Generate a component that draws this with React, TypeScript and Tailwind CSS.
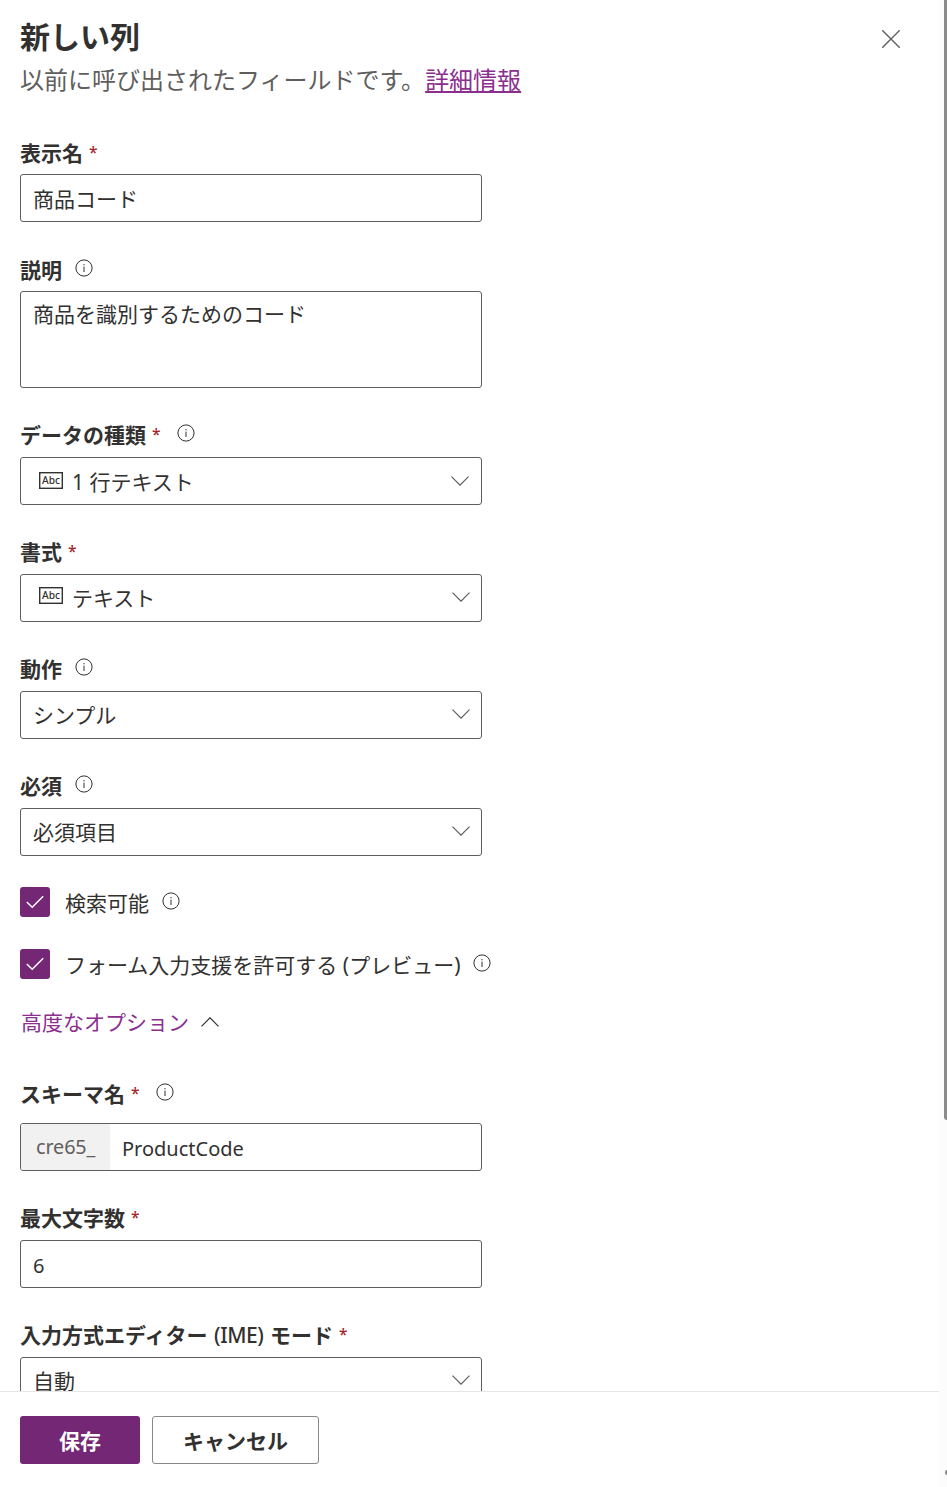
import React from "react";

const InfoIcon = ({ className = "" }: { className?: string }) => (
    <svg className={`h-[18px] w-[18px] shrink-0 text-[#323130] ${className}`} viewBox="0 0 18 18" fill="none">
        <circle cx="9" cy="9" r="8.1" stroke="currentColor" strokeWidth="1" />
        <path d="M9 7.6V13" stroke="currentColor" strokeWidth="1" />
        <path d="M9 5V6.3" stroke="currentColor" strokeWidth="1" />
    </svg>
);

const Chevron = ({ className = "" }: { className?: string }) => (
    <svg className={`h-[10px] w-[18px] shrink-0 ${className}`} viewBox="0 0 18 10" fill="none">
        <path d="M0.5 0.7L9 9.2L17.5 0.7" stroke="currentColor" strokeWidth="1.2" />
    </svg>
);

const AbcIcon = ({ className = "" }: { className?: string }) => (
    <svg className={`mr-[9px] ml-[6px] h-[17px] w-[24px] shrink-0 ${className}`} viewBox="0 0 24 17" fill="none">
        <rect x="0.7" y="0.7" width="22.6" height="15.6" stroke="#323130" strokeWidth="1.4" />
        <text x="12" y="12.2" textAnchor="middle" fontSize="10.2" fontWeight="500" fill="#323130">
            Abc
        </text>
    </svg>
);

const Label = ({
    children,
    required,
    info,
    className = "pb-[2px]",
}: {
    children: React.ReactNode;
    required?: boolean;
    info?: boolean;
    className?: string;
}) => (
    <div className={`flex h-[42px] items-center leading-[42px] font-bold whitespace-nowrap ${className}`}>
        <span>{children}</span>
        {required && <span className="mb-[3px] ml-[6px] text-[15.5px] font-medium text-[#a4262c]">*</span>}
        {info && <InfoIcon className={required ? "mb-[4px] ml-[16.5px]" : "mb-[4px] ml-[13px]"} />}
    </div>
);

const Select = ({
    children,
    icon,
    textClass = "",
    chevronClass = "mb-[2px]",
}: {
    children: React.ReactNode;
    icon?: React.ReactNode;
    textClass?: string;
    chevronClass?: string;
}) => (
    <div className="flex h-[48px] w-[462px] items-center rounded-[3px] border border-[#605e5c] pr-[11px] pl-[12px]">
        {icon}
        <span className={`flex-1 leading-[46px] ${textClass}`}>{children}</span>
        <Chevron className={`text-[#605e5c] ${chevronClass}`} />
    </div>
);

const CheckRow = ({ children }: { children: React.ReactNode }) => (
    <div className="flex h-[30px] items-center">
        <span className="flex h-[30px] w-[30px] items-center justify-center rounded-[3px] bg-[#742774]">
            <svg className="h-[14px] w-[18px]" viewBox="0 0 18 14" fill="none">
                <path d="M0.8 7L6.2 12.3L17.2 1.2" stroke="#fff" strokeWidth="1.5" />
            </svg>
        </span>
        <span className="mt-[2px] ml-[15px] leading-[30px] whitespace-nowrap">{children}</span>
        <InfoIcon className="mb-[2px] ml-[13px]" />
    </div>
);

const App = () => {
    return (
        <div
            lang="ja"
            className="flex h-[1487px] w-[947px] overflow-hidden bg-white font-['Noto_Sans','Noto_Sans_CJK_JP',sans-serif] text-[21px] text-[#323130]"
        >
            <div className="flex w-[939px] flex-col">
                <main className="h-[1391px] overflow-hidden pl-[20px]">
                    <header className="flex h-[132px] justify-between pr-[39px]">
                        <div>
                            <h1 className="pt-[15px] text-[30px] leading-[44px] font-bold">新しい列</h1>
                            <p className="text-[24px] leading-[42px] text-[#605e5c]">
                                以前に呼び出されたフィールドです。
                                <a className="text-[#8b2f8f] underline">詳細情報</a>
                            </p>
                        </div>
                        <button aria-label="閉じる" className="mt-[30px] h-[18px] w-[18px]">
                            <svg viewBox="0 0 18 18" fill="none">
                                <path d="M0.3 0.3L17.7 17.7M17.7 0.3L0.3 17.7" stroke="#605e5c" strokeWidth="1.4" />
                            </svg>
                        </button>
                    </header>

                    <div className="flex flex-col gap-[27px]">
                        <div>
                            <Label required className="pb-0">表示名</Label>
                            <div className="h-[48px] w-[462px] rounded-[3px] border border-[#605e5c] px-[12px] leading-[48px]">
                                商品コード
                            </div>
                        </div>
                        <div>
                            <Label info className="pb-0">説明</Label>
                            <div className="h-[97px] w-[462px] rounded-[3px] border border-[#605e5c] px-[12px] leading-[44px]">
                                商品を識別するためのコード
                            </div>
                        </div>
                        <div>
                            <Label required info>データの種類</Label>
                            <Select
                                icon={<AbcIcon className="mb-[2px]" />}
                                textClass="mt-[2px]"
                                chevronClass="mr-[1px]"
                            >
                                1 行テキスト
                            </Select>
                        </div>
                        <div>
                            <Label required>書式</Label>
                            <Select icon={<AbcIcon className="mb-[6px]" />}>テキスト</Select>
                        </div>
                        <div>
                            <Label info>動作</Label>
                            <Select>シンプル</Select>
                        </div>
                        <div>
                            <Label info>必須</Label>
                            <Select>必須項目</Select>
                        </div>
                    </div>

                    <div className="mt-[31px] flex flex-col gap-[32px]">
                        <CheckRow>検索可能</CheckRow>
                        <CheckRow>フォーム入力支援を許可する (プレビュー)</CheckRow>
                    </div>

                    <div className="mt-[22px] mb-[30px] flex h-[42px] items-center">
                        <span className="mt-[2px] ml-[1px] text-[#8b2f8f]">高度なオプション</span>
                        <Chevron className="ml-[12px] rotate-180" />
                    </div>

                    <div className="flex flex-col gap-[27px]">
                        <div>
                            <Label required info className="mb-[8px]">スキーマ名</Label>
                            <div className="flex h-[48px] w-[462px] overflow-hidden rounded-[3px] border border-[#605e5c]">
                                <span className="w-[89px] bg-[#f1f1f1] pl-[15px] text-[19.8px] leading-[45px] tracking-[-0.1px] text-[#605e5c]">
                                    cre65_
                                </span>
                                <span className="pl-[12px] text-[20px] leading-[50px]">ProductCode</span>
                            </div>
                        </div>
                        <div>
                            <Label required>最大文字数</Label>
                            <div className="h-[48px] w-[462px] rounded-[3px] border border-[#605e5c] px-[12px] text-[20px] leading-[50px]">
                                6
                            </div>
                        </div>
                        <div>
                            <Label required>
                                入力方式エディター <span className="mx-[1px] tracking-[-0.4px] font-medium">(IME)</span> モード
                            </Label>
                            <Select>自動</Select>
                        </div>
                    </div>
                </main>

                <footer className="flex h-[96px] gap-[12px] border-t border-[#e6e6e6] pt-[24px] pl-[20px] font-bold">
                    <button className="h-[48px] w-[120px] rounded-[3px] bg-[#742774] pt-[3px] text-white">保存</button>
                    <button className="h-[48px] w-[167px] rounded-[3px] border border-[#8a8886] pt-[3px]">キャンセル</button>
                </footer>
            </div>

            {/* scrollbar */}
            <div className="flex h-full w-[8px] flex-col items-end justify-between overflow-hidden bg-[#fcfcfc]">
                <div className="h-[1120px] w-[3px] rounded-bl-[3px] bg-[#8b8b8b]" />
                <div className="mb-[12px] h-[5px] w-[2px] rounded-l-[2px] bg-[#8b8b8b]" />
            </div>
        </div>
    );
};

export default App;
